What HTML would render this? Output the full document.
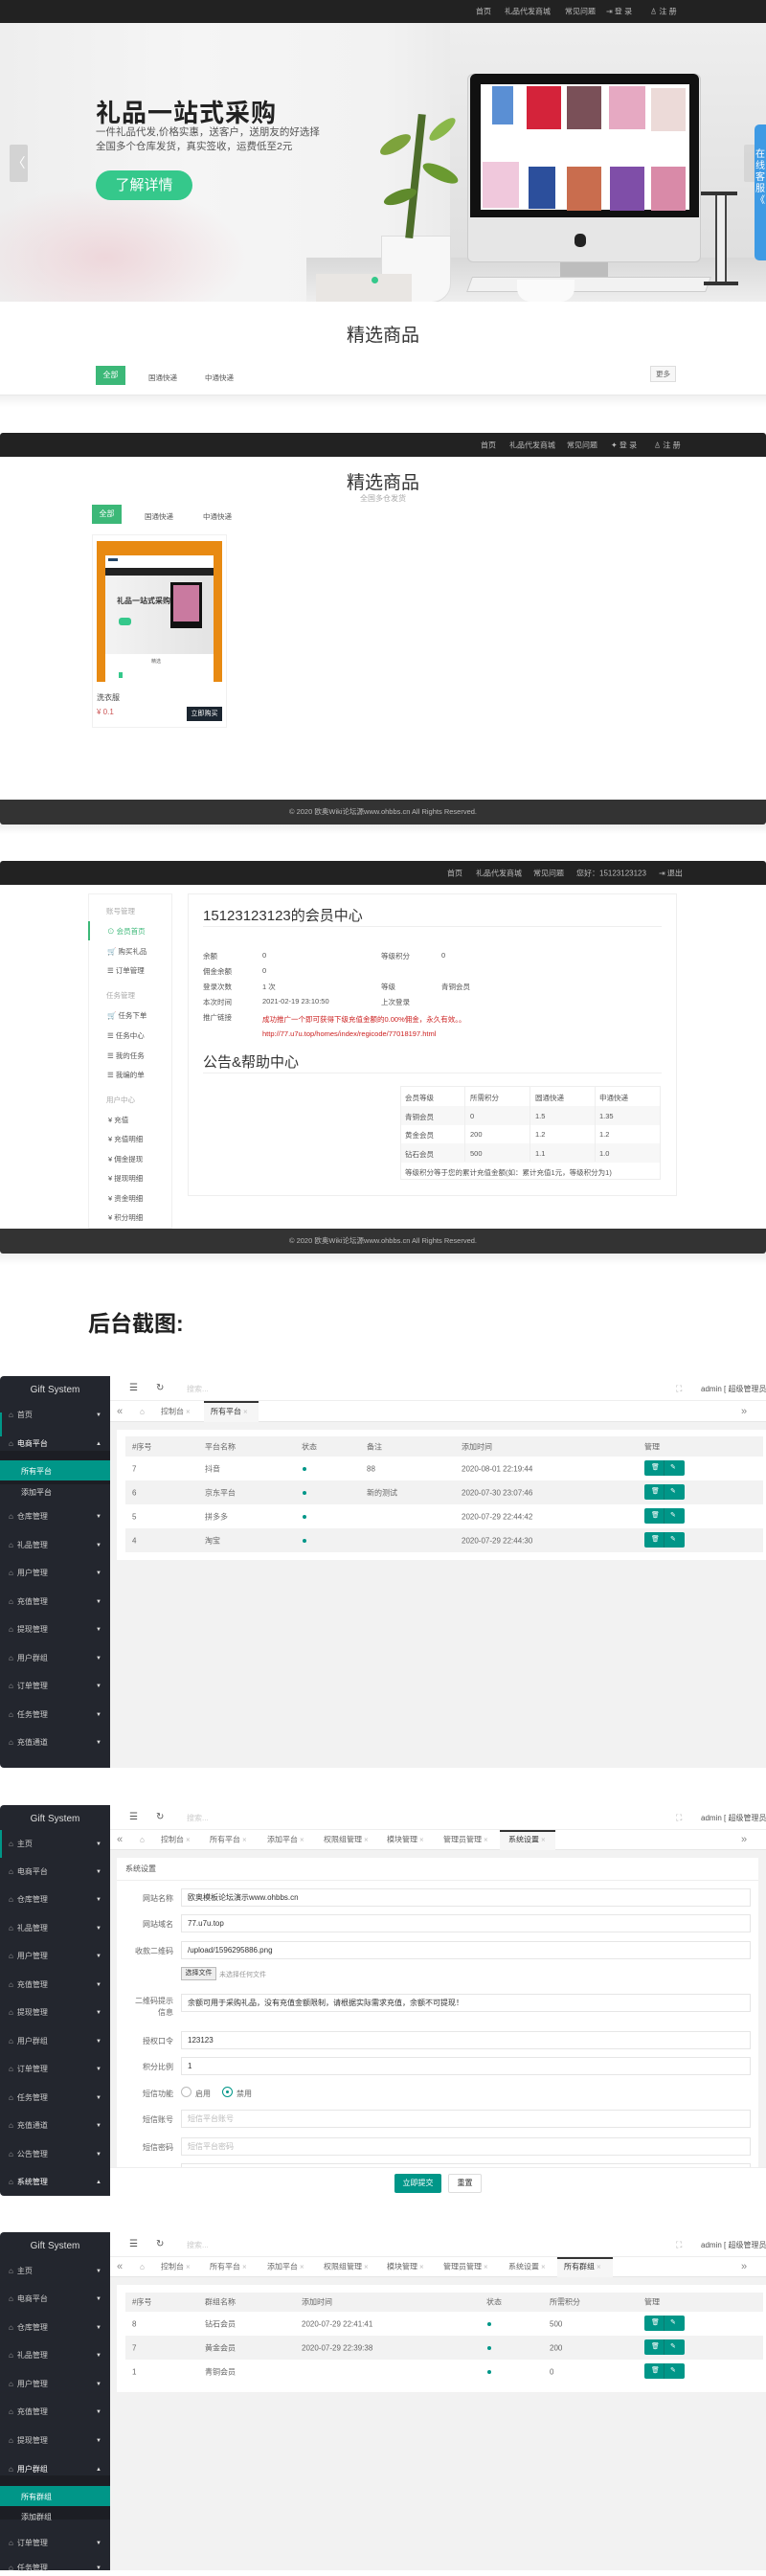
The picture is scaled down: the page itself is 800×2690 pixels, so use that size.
<!DOCTYPE html>
<html><head><meta charset="utf-8">
<style>
*{margin:0;padding:0;box-sizing:border-box}
body{width:800px;height:2684px;overflow:hidden;background:#fff;font-family:"Liberation Sans","Noto Sans CJK SC",sans-serif;position:relative;color:#333}
.a{position:absolute}
.nav{background:#222;color:#bbb;font-size:8px}
.nav span{position:absolute;top:50%;transform:translateY(-50%);white-space:nowrap}
.t{position:absolute;white-space:nowrap}
.sb{position:absolute;left:0;width:115px;background:#23262e;border-radius:4px 0 0 4px;overflow:hidden}
.si{position:absolute;left:0;width:115px;height:16px;line-height:16px;font-size:8px;color:#ccc;padding-left:9px;white-space:nowrap}
.si i{font-style:normal;margin-right:4px;color:#aaa}
.si b{position:absolute;right:9px;font-weight:normal;font-size:6px;color:#ddd}
.sub{position:absolute;left:0;width:115px;font-size:8px;color:#ddd;padding-left:22px;white-space:nowrap}
.hd{position:absolute;left:115px;right:0;background:#fff;border-bottom:1px solid #eee;font-size:9px;color:#555}
.tabs{position:absolute;left:115px;right:0;background:#fff;border-bottom:1px solid #e6e6e6;font-size:8px;color:#666}
.tabs span{position:absolute;top:50%;transform:translateY(-50%);white-space:nowrap}
.tabs .x{color:#ccc;font-size:7px}
.ct{position:absolute;left:115px;right:0;background:#f2f2f2}
.card{position:absolute;left:122px;right:0;background:#fff}
.tr{position:absolute;left:131px;right:3px;height:25px;font-size:8px;color:#666}
.tr span{position:absolute;top:50%;transform:translateY(-50%);white-space:nowrap}
.g{background:#f2f2f2}
.dot{width:4px;height:4px;border-radius:50%;background:#009688}
.btn2{position:absolute;left:673px;width:42px;height:16px;top:4px;background:#009688;border-radius:2px;color:#fff;font-size:7px}
.btn2:before{content:"";position:absolute;left:20px;top:0;width:1px;height:16px;background:#0a7d72}
.btn2 em{position:absolute;font-style:normal;top:3px}
.fl{position:absolute;right:calc(800px - 181px);font-size:8px;color:#666;text-align:right;white-space:nowrap}
.in{position:absolute;left:189px;width:595px;height:19px;border:1px solid #e6e6e6;font-size:8px;color:#333;padding-left:6px;line-height:17px;white-space:nowrap}
.ph{color:#bbb}
</style></head><body>

<!-- ===== Section 1: hero ===== -->
<div class="a nav" style="left:0;top:0;width:800px;height:24px">
<span style="left:497px">首页</span><span style="left:527px">礼品代发商城</span><span style="left:590px">常见问题</span><span style="left:633px">⇥ 登 录</span><span style="left:679px">♙ 注 册</span>
</div>
<div class="a" style="left:0;top:24px;width:800px;height:291px;background:linear-gradient(90deg,#eeeeee 0%,#f5f5f5 25%,#f2f2f2 50%,#e8e8e8 62%,#e0e0e0 75%,#ebebeb 100%);overflow:hidden">
  <div class="a" style="left:-40px;top:170px;width:300px;height:150px;background:radial-gradient(ellipse at center,#eed7db 0%,rgba(240,220,224,0) 70%)"></div>
  <div class="a" style="left:470px;top:0;width:330px;height:291px;background:linear-gradient(180deg,#eeeeee,#dcdcdc)"></div>
  <div class="a" style="left:320px;top:245px;width:480px;height:46px;background:linear-gradient(180deg,#d8d8d8,#eeeeee)"></div>
  <div class="a" style="left:488px;top:53px;width:244px;height:197px;background:#e6e6e6;border-radius:6px;border:1px solid #ccc"></div>
  <div class="a" style="left:491px;top:53px;width:239px;height:150px;background:#111;border-radius:6px 6px 0 0"></div>
  <div class="a" style="left:502px;top:64px;width:218px;height:131px;background:#fff"></div>
  <div class="a" style="left:514px;top:66px;width:22px;height:40px;background:#5a8fd4"></div>
  <div class="a" style="left:550px;top:66px;width:36px;height:45px;background:#d4233a"></div>
  <div class="a" style="left:592px;top:66px;width:36px;height:45px;background:#7a5058"></div>
  <div class="a" style="left:636px;top:66px;width:38px;height:45px;background:#e6a9c2"></div>
  <div class="a" style="left:680px;top:68px;width:36px;height:45px;background:#ecdad8"></div>
  <div class="a" style="left:504px;top:145px;width:38px;height:48px;background:#f0c8dc"></div>
  <div class="a" style="left:552px;top:150px;width:28px;height:44px;background:#2c4f9c"></div>
  <div class="a" style="left:592px;top:150px;width:36px;height:46px;background:#c96d4e"></div>
  <div class="a" style="left:637px;top:150px;width:36px;height:46px;background:#7f4ea8"></div>
  <div class="a" style="left:680px;top:150px;width:36px;height:46px;background:#d98aa8"></div>
  <div class="a" style="left:600px;top:220px;width:12px;height:14px;background:#222;border-radius:5px"></div>
  <div class="a" style="left:585px;top:250px;width:50px;height:22px;background:#bdbdbd"></div>
  <div class="a" style="left:490px;top:265px;width:250px;height:16px;background:#f2f2f2;border:1px solid #ccc;transform:skewX(-20deg)"></div>
  <div class="a" style="left:398px;top:222px;width:73px;height:70px;background:#f7f7f7;border-radius:0 0 20px 20px;border:1px solid #ddd"></div>
  <div class="a" style="left:540px;top:268px;width:60px;height:23px;background:#fafafa;border-radius:0 0 14px 14px"></div>
  <div class="a" style="left:430px;top:95px;width:8px;height:130px;background:#4d6d2a;transform:rotate(6deg)"></div>
  <div class="a" style="left:395px;top:120px;width:36px;height:14px;background:#7da33c;border-radius:50%;transform:rotate(-30deg)"></div>
  <div class="a" style="left:440px;top:150px;width:40px;height:14px;background:#6a9a30;border-radius:50%;transform:rotate(25deg)"></div>
  <div class="a" style="left:400px;top:175px;width:36px;height:13px;background:#5f8a2c;border-radius:50%;transform:rotate(-20deg)"></div>
  <div class="a" style="left:445px;top:105px;width:34px;height:12px;background:#8ab84a;border-radius:50%;transform:rotate(-40deg)"></div>
  <div class="a" style="left:330px;top:262px;width:100px;height:29px;background:#e9e6e3"></div>
  <div class="a" style="left:732px;top:176px;width:38px;height:4px;background:#333"></div>
  <div class="a" style="left:735px;top:270px;width:36px;height:4px;background:#333"></div>
  <div class="a" style="left:747px;top:180px;width:12px;height:90px;background:#eee;border-left:2px solid #444;border-right:2px solid #444"></div>
  <div class="t" style="left:100px;top:74px;font-size:26px;font-weight:bold;color:#222;letter-spacing:1px">礼品一站式采购</div>
  <div class="t" style="left:100px;top:107px;font-size:10.5px;color:#555;line-height:15px">一件礼品代发,价格实惠，送客户，送朋友的好选择<br>全国多个仓库发货，真实签收，运费低至2元</div>
  <div class="a" style="left:100px;top:154px;width:101px;height:31px;background:#35c88b;border-radius:16px;color:#fff;font-size:15px;text-align:center;line-height:31px">了解详情</div>
  <div class="a" style="left:10px;top:127px;width:19px;height:39px;background:rgba(200,200,200,.7);border-radius:2px;color:#fff;font-size:14px;text-align:center;line-height:39px">〈</div>
  <div class="a" style="left:777px;top:127px;width:19px;height:39px;background:rgba(200,200,200,.5);border-radius:2px"></div>
  <div class="a" style="left:788px;top:106px;width:12px;height:142px;background:#3e9ae4;border-radius:5px 0 0 5px;color:#fff;font-size:10px;line-height:12px;padding-top:26px;padding-left:1px">在<br>线<br>客<br>服<br>《</div>
  <div class="a" style="left:388px;top:265px;width:7px;height:7px;border-radius:50%;background:#35c88b"></div>
</div>
<div class="t" style="left:0;width:800px;text-align:center;top:335px;font-size:19px;color:#333">精选商品</div>
<div class="a" style="left:100px;top:382px;width:31px;height:20px;background:#3cb878;color:#fff;font-size:8px;text-align:center;line-height:20px">全部</div>
<div class="t" style="left:155px;top:389px;font-size:7.5px;color:#555">国通快递</div>
<div class="t" style="left:214px;top:389px;font-size:7.5px;color:#555">中通快递</div>
<div class="a" style="left:679px;top:382px;width:27px;height:17px;border:1px solid #ddd;background:#f7f7f7;color:#666;font-size:7.5px;text-align:center;line-height:15px">更多</div>
<div class="a" style="left:0;top:412px;width:800px;height:1px;background:#e8e8e8"></div>
<div class="a" style="left:0;top:413px;width:800px;height:12px;background:linear-gradient(#f0f0f0,#fff)"></div>

<!-- ===== Section 2 ===== -->
<div class="a nav" style="left:0;top:452px;width:800px;height:25px;border-radius:3px 3px 0 0">
<span style="left:502px">首页</span><span style="left:532px">礼品代发商城</span><span style="left:592px">常见问题</span><span style="left:638px">✦ 登 录</span><span style="left:683px">♙ 注 册</span>
</div>
<div class="t" style="left:0;width:800px;text-align:center;top:489px;font-size:19px;color:#333">精选商品</div>
<div class="t" style="left:0;width:800px;text-align:center;top:515px;font-size:8px;color:#aaa">全国多仓发货</div>
<div class="a" style="left:96px;top:527px;width:31px;height:20px;background:#3cb878;color:#fff;font-size:8px;text-align:center;line-height:20px">全部</div>
<div class="t" style="left:151px;top:534px;font-size:7.5px;color:#555">国通快递</div>
<div class="t" style="left:212px;top:534px;font-size:7.5px;color:#555">中通快递</div>
<div class="a" style="left:96px;top:558px;width:141px;height:202px;border:1px solid #f0f0f0;background:#fff"></div>
<div class="a" style="left:101px;top:565px;width:131px;height:147px;background:#e88a12">
  <div class="a" style="left:9px;top:15px;width:113px;height:132px;background:#fff">
    <div class="a" style="left:3px;top:3px;width:10px;height:3px;background:#246"></div>
    <div class="a" style="left:0;top:13px;width:113px;height:8px;background:#222"></div>
    <div class="a" style="left:0;top:21px;width:113px;height:82px;background:linear-gradient(90deg,#f3f3f3,#e3e3e3)"></div>
    <div class="t" style="left:12px;top:42px;font-size:8px;font-weight:bold;color:#333">礼品一站式采购</div>
    <div class="a" style="left:14px;top:65px;width:13px;height:8px;background:#35c88b;border-radius:3px"></div>
    <div class="a" style="left:68px;top:28px;width:33px;height:48px;background:#111"></div>
    <div class="a" style="left:71px;top:31px;width:27px;height:38px;background:#c97aa0"></div>
    <div class="t" style="left:48px;top:107px;font-size:5px;color:#666">精选</div>
    <div class="a" style="left:14px;top:122px;width:4px;height:6px;background:#35c88b"></div>
  </div>
</div>
<div class="t" style="left:101px;top:723px;font-size:8px;color:#444">洗衣服</div>
<div class="t" style="left:101px;top:739px;font-size:8px;color:#c55">¥ 0.1</div>
<div class="a" style="left:195px;top:738px;width:37px;height:15px;background:#1b2530;color:#fff;font-size:7px;text-align:center;line-height:15px">立即购买</div>
<div class="a" style="left:0;top:835px;width:800px;height:26px;background:#333;border-radius:0 0 3px 3px;color:#bbb;font-size:7.5px;text-align:center;line-height:26px">© 2020 欧奥Wiki论坛源www.ohbbs.cn All Rights Reserved.</div>
<div class="a" style="left:0;top:861px;width:800px;height:10px;background:linear-gradient(#eee,#fff)"></div>

<!-- ===== Section 3: member center ===== -->
<div class="a nav" style="left:0;top:899px;width:800px;height:25px;border-radius:3px 3px 0 0">
<span style="left:467px">首页</span><span style="left:497px">礼品代发商城</span><span style="left:557px">常见问题</span><span style="left:602px">您好：15123123123</span><span style="left:688px">⇥ 退出</span>
</div>
<div class="a" style="left:92px;top:933px;width:88px;height:350px;border:1px solid #f0f0f0;background:#fff"></div>
<div class="a" style="left:92px;top:962px;width:2px;height:20px;background:#3cb878"></div>
<div style="font-size:7.5px;color:#555">
<div class="t" style="left:111px;top:946px;color:#aaa">账号管理</div>
<div class="t" style="left:112px;top:967px;color:#3cb878">⊙ 会员首页</div>
<div class="t" style="left:112px;top:988px">🛒 购买礼品</div>
<div class="t" style="left:112px;top:1008px">☰ 订单管理</div>
<div class="t" style="left:111px;top:1034px;color:#aaa">任务管理</div>
<div class="t" style="left:112px;top:1055px">🛒 任务下单</div>
<div class="t" style="left:112px;top:1076px">☰ 任务中心</div>
<div class="t" style="left:112px;top:1097px">☰ 我的任务</div>
<div class="t" style="left:112px;top:1117px">☰ 我编的单</div>
<div class="t" style="left:111px;top:1143px;color:#aaa">用户中心</div>
<div class="t" style="left:113px;top:1164px">¥ 充值</div>
<div class="t" style="left:113px;top:1184px">¥ 充值明细</div>
<div class="t" style="left:113px;top:1205px">¥ 佣金提现</div>
<div class="t" style="left:113px;top:1225px">¥ 提现明细</div>
<div class="t" style="left:113px;top:1246px">¥ 资金明细</div>
<div class="t" style="left:113px;top:1266px">¥ 积分明细</div>
</div>
<div class="a" style="left:196px;top:933px;width:511px;height:316px;border:1px solid #eee;background:#fff"></div>
<div class="t" style="left:212px;top:945px;font-size:15px;color:#333">15123123123的会员中心</div>
<div class="a" style="left:212px;top:967px;width:479px;height:1px;background:#eee"></div>
<div style="font-size:7.5px;color:#555">
<div class="t" style="left:212px;top:993px">余额</div><div class="t" style="left:274px;top:993px">0</div><div class="t" style="left:398px;top:993px">等级积分</div><div class="t" style="left:461px;top:993px">0</div>
<div class="t" style="left:212px;top:1009px">佣金余额</div><div class="t" style="left:274px;top:1009px">0</div>
<div class="t" style="left:212px;top:1025px">登录次数</div><div class="t" style="left:274px;top:1025px">1 次</div><div class="t" style="left:398px;top:1025px">等级</div><div class="t" style="left:461px;top:1025px">青铜会员</div>
<div class="t" style="left:212px;top:1041px">本次时间</div><div class="t" style="left:274px;top:1041px">2021-02-19 23:10:50</div><div class="t" style="left:398px;top:1041px">上次登录</div>
<div class="t" style="left:212px;top:1057px">推广链接</div>
<div class="t" style="left:274px;top:1057px;color:#c22;line-height:15px">成功推广一个即可获得下级充值金额的0.00%佣金，永久有效。。<br>http://77.u7u.top/homes/index/regicode/77018197.html</div>
</div>
<div class="t" style="left:212px;top:1098px;font-size:15px;color:#333">公告&amp;帮助中心</div>
<div class="a" style="left:212px;top:1120px;width:479px;height:1px;background:#eee"></div>
<div class="a" style="left:418px;top:1134px;width:272px;height:98px;border:1px solid #eee;font-size:7.5px;color:#555">
  <div class="a" style="left:0;top:20px;width:270px;height:20px;background:#f7f7f7"></div>
  <div class="a" style="left:0;top:59px;width:270px;height:20px;background:#f7f7f7"></div>
  <div class="a" style="left:66px;top:0;width:1px;height:78px;background:#eee"></div>
  <div class="a" style="left:134px;top:0;width:1px;height:78px;background:#eee"></div>
  <div class="a" style="left:202px;top:0;width:1px;height:78px;background:#eee"></div>
  <div class="t" style="left:4px;top:6px">会员等级</div><div class="t" style="left:72px;top:6px">所需积分</div><div class="t" style="left:140px;top:6px">圆通快递</div><div class="t" style="left:207px;top:6px">申通快递</div>
  <div class="t" style="left:4px;top:26px">青铜会员</div><div class="t" style="left:72px;top:26px">0</div><div class="t" style="left:140px;top:26px">1.5</div><div class="t" style="left:207px;top:26px">1.35</div>
  <div class="t" style="left:4px;top:45px">黄金会员</div><div class="t" style="left:72px;top:45px">200</div><div class="t" style="left:140px;top:45px">1.2</div><div class="t" style="left:207px;top:45px">1.2</div>
  <div class="t" style="left:4px;top:65px">钻石会员</div><div class="t" style="left:72px;top:65px">500</div><div class="t" style="left:140px;top:65px">1.1</div><div class="t" style="left:207px;top:65px">1.0</div>
  <div class="t" style="left:4px;top:84px">等级积分等于您的累计充值金额(如：累计充值1元，等级积分为1)</div>
</div>
<div class="a" style="left:0;top:1283px;width:800px;height:26px;background:#333;border-radius:0 0 3px 3px;color:#bbb;font-size:7.5px;text-align:center;line-height:26px">© 2020 欧奥Wiki论坛源www.ohbbs.cn All Rights Reserved.</div>
<div class="a" style="left:0;top:1309px;width:800px;height:12px;background:linear-gradient(#eee,#fff)"></div>

<div class="t" style="left:92px;top:1363px;font-size:23px;font-weight:bold;color:#222">后台截图:</div>

<!-- ===== Admin 1 ===== -->
<div class="ct" style="top:1437px;height:409px"></div>
<div class="sb" style="top:1437px;height:409px">
  <div class="t" style="left:0;width:115px;text-align:center;top:9px;font-size:10px;color:#ddd">Gift System</div>
  <div class="a" style="left:0;top:78px;width:115px;height:35px;background:#1c1e24"></div>
  <div class="a" style="left:0;top:88px;width:115px;height:21px;background:#009688"></div>
  <div class="a" style="left:0;top:38px;width:2px;height:25px;background:#009688"></div>
</div>
<div class="si" style="top:1470px"><i>⌂</i>首页<b>▼</b></div>
<div class="si" style="top:1500px;color:#fff"><i>⌂</i>电商平台<b>▲</b></div>
<div class="sub" style="top:1531px;color:#fff">所有平台</div>
<div class="sub" style="top:1553px">添加平台</div>
<div class="si" style="top:1576px"><i>⌂</i>仓库管理<b>▼</b></div>
<div class="si" style="top:1606px"><i>⌂</i>礼品管理<b>▼</b></div>
<div class="si" style="top:1635px"><i>⌂</i>用户管理<b>▼</b></div>
<div class="si" style="top:1665px"><i>⌂</i>充值管理<b>▼</b></div>
<div class="si" style="top:1694px"><i>⌂</i>提现管理<b>▼</b></div>
<div class="si" style="top:1724px"><i>⌂</i>用户群组<b>▼</b></div>
<div class="si" style="top:1753px"><i>⌂</i>订单管理<b>▼</b></div>
<div class="si" style="top:1783px"><i>⌂</i>任务管理<b>▼</b></div>
<div class="si" style="top:1812px"><i>⌂</i>充值通道<b>▼</b></div>
<div class="hd" style="top:1437px;height:26px">
  <span class="t" style="left:20px;top:7px;font-size:10px">☰</span><span class="t" style="left:48px;top:7px;font-size:10px">↻</span><span class="t" style="left:80px;top:8px;font-size:8px;color:#ccc">搜索...</span>
  <span class="t" style="left:591px;top:8px;color:#aaa">⛶</span><span class="t" style="left:617px;top:8px;font-size:8px">admin [ 超级管理员 ]</span>
</div>
<div class="tabs" style="top:1463px;height:22px">
  <span style="left:7px;font-size:11px;color:#888">«</span><span style="left:31px;color:#999">⌂</span>
  <span style="left:53px">控制台 <b class="x">×</b></span>
  <div class="a" style="left:98px;top:0;width:57px;height:22px;background:#f6f6f6;border-top:2px solid #333"></div>
  <span style="left:105px;color:#333">所有平台 <b class="x">×</b></span>
  <span style="left:659px;font-size:11px;color:#888">»</span>
</div>
<div class="card" style="top:1493px;height:136px"></div>
<div class="tr g" style="top:1500px;height:21px"><span style="left:7px">#序号</span><span style="left:83px">平台名称</span><span style="left:184px">状态</span><span style="left:252px">备注</span><span style="left:351px">添加时间</span><span style="left:542px">管理</span></div>
<div class="tr" style="top:1521px"><span style="left:7px">7</span><span style="left:83px">抖音</span><span class="dot" style="left:185px"></span><span style="left:252px">88</span><span style="left:351px">2020-08-01 22:19:44</span><div class="btn2" style="left:542px"><em style="left:7px">🗑</em><em style="left:27px">✎</em></div></div>
<div class="tr g" style="top:1546px"><span style="left:7px">6</span><span style="left:83px">京东平台</span><span class="dot" style="left:185px"></span><span style="left:252px">新的测试</span><span style="left:351px">2020-07-30 23:07:46</span><div class="btn2" style="left:542px"><em style="left:7px">🗑</em><em style="left:27px">✎</em></div></div>
<div class="tr" style="top:1571px"><span style="left:7px">5</span><span style="left:83px">拼多多</span><span class="dot" style="left:185px"></span><span style="left:351px">2020-07-29 22:44:42</span><div class="btn2" style="left:542px"><em style="left:7px">🗑</em><em style="left:27px">✎</em></div></div>
<div class="tr g" style="top:1596px"><span style="left:7px">4</span><span style="left:83px">淘宝</span><span class="dot" style="left:185px"></span><span style="left:351px">2020-07-29 22:44:30</span><div class="btn2" style="left:542px"><em style="left:7px">🗑</em><em style="left:27px">✎</em></div></div>

<!-- ===== Admin 2 ===== -->
<div class="ct" style="top:1885px;height:408px"></div>
<div class="sb" style="top:1885px;height:408px">
  <div class="t" style="left:0;width:115px;text-align:center;top:9px;font-size:10px;color:#ddd">Gift System</div>
  <div class="a" style="left:0;top:26px;width:2px;height:29px;background:#009688"></div>
</div>
<div class="si" style="top:1918px"><i>⌂</i>主页<b>▼</b></div>
<div class="si" style="top:1947px"><i>⌂</i>电商平台<b>▼</b></div>
<div class="si" style="top:1976px"><i>⌂</i>仓库管理<b>▼</b></div>
<div class="si" style="top:2006px"><i>⌂</i>礼品管理<b>▼</b></div>
<div class="si" style="top:2035px"><i>⌂</i>用户管理<b>▼</b></div>
<div class="si" style="top:2065px"><i>⌂</i>充值管理<b>▼</b></div>
<div class="si" style="top:2094px"><i>⌂</i>提现管理<b>▼</b></div>
<div class="si" style="top:2124px"><i>⌂</i>用户群组<b>▼</b></div>
<div class="si" style="top:2153px"><i>⌂</i>订单管理<b>▼</b></div>
<div class="si" style="top:2183px"><i>⌂</i>任务管理<b>▼</b></div>
<div class="si" style="top:2212px"><i>⌂</i>充值通道<b>▼</b></div>
<div class="si" style="top:2242px"><i>⌂</i>公告管理<b>▼</b></div>
<div class="si" style="top:2271px;color:#fff"><i>⌂</i>系统管理<b>▲</b></div>
<div class="hd" style="top:1885px;height:26px">
  <span class="t" style="left:20px;top:7px;font-size:10px">☰</span><span class="t" style="left:48px;top:7px;font-size:10px">↻</span><span class="t" style="left:80px;top:8px;font-size:8px;color:#ccc">搜索...</span>
  <span class="t" style="left:591px;top:8px;color:#aaa">⛶</span><span class="t" style="left:617px;top:8px;font-size:8px">admin [ 超级管理员 ]</span>
</div>
<div class="tabs" style="top:1911px;height:21px">
  <span style="left:7px;font-size:11px;color:#888">«</span><span style="left:31px;color:#999">⌂</span>
  <span style="left:53px">控制台 <b class="x">×</b></span>
  <span style="left:104px">所有平台 <b class="x">×</b></span>
  <span style="left:164px">添加平台 <b class="x">×</b></span>
  <span style="left:223px">权限组管理 <b class="x">×</b></span>
  <span style="left:289px">模块管理 <b class="x">×</b></span>
  <span style="left:348px">管理员管理 <b class="x">×</b></span>
  <div class="a" style="left:407px;top:0;width:58px;height:21px;background:#f6f6f6;border-top:2px solid #333"></div>
  <span style="left:416px;color:#333">系统设置 <b class="x">×</b></span>
  <span style="left:659px;font-size:11px;color:#888">»</span>
</div>
<div class="card" style="top:1940px;height:323px;right:8px"></div>
<div class="t" style="left:131px;top:1946px;font-size:8px;color:#555">系统设置</div>
<div class="a" style="left:122px;top:1963px;width:670px;height:1px;background:#eee"></div>
<div class="fl" style="top:1977px">网站名称</div><div class="in" style="top:1972px">欧奥模板论坛演示www.ohbbs.cn</div>
<div class="fl" style="top:2004px">网站域名</div><div class="in" style="top:1999px">77.u7u.top</div>
<div class="fl" style="top:2032px">收款二维码</div><div class="in" style="top:2027px">/upload/1596295886.png</div>
<div class="a" style="left:189px;top:2054px;width:37px;height:14px;border:1px solid #bbb;background:#eee;font-size:7px;line-height:12px;text-align:center;color:#333">选择文件</div>
<div class="t" style="left:229px;top:2057px;font-size:7px;color:#999">未选择任何文件</div>
<div class="fl" style="top:2084px;line-height:12px">二维码提示<br>信息</div><div class="in" style="top:2082px">余额可用于采购礼品，没有充值金额限制，请根据实际需求充值，余额不可提现！</div>
<div class="fl" style="top:2126px">授权口令</div><div class="in" style="top:2121px">123123</div>
<div class="fl" style="top:2153px">积分比例</div><div class="in" style="top:2148px">1</div>
<div class="fl" style="top:2181px">短信功能</div>
<div class="a" style="left:189px;top:2179px;width:11px;height:11px;border:1px solid #bbb;border-radius:50%"></div><div class="t" style="left:204px;top:2181px;font-size:8px;color:#666">启用</div>
<div class="a" style="left:232px;top:2179px;width:11px;height:11px;border:1px solid #009688;border-radius:50%"></div><div class="a" style="left:236px;top:2183px;width:3px;height:3px;background:#009688;border-radius:50%"></div><div class="t" style="left:247px;top:2181px;font-size:8px;color:#666">禁用</div>
<div class="fl" style="top:2208px">短信账号</div><div class="in ph" style="top:2203px">短信平台账号</div>
<div class="fl" style="top:2237px">短信密码</div><div class="in" style="top:2232px;color:#bbb">短信平台密码</div>
<div class="in" style="top:2259px;height:4px;border-bottom:none"></div>
<div class="a" style="left:115px;top:2263px;width:685px;height:30px;background:#fff;border-top:1px solid #eee"></div>
<div class="a" style="left:412px;top:2270px;width:49px;height:20px;background:#009688;color:#fff;font-size:8px;text-align:center;line-height:20px;border-radius:2px">立即提交</div>
<div class="a" style="left:468px;top:2270px;width:35px;height:20px;border:1px solid #ddd;background:#fff;color:#333;font-size:8px;text-align:center;line-height:18px;border-radius:2px">重置</div>

<!-- ===== Admin 3 ===== -->
<div class="ct" style="top:2331px;height:353px"></div>
<div class="sb" style="top:2331px;height:353px;border-radius:4px 0 0 0">
  <div class="t" style="left:0;width:115px;text-align:center;top:9px;font-size:10px;color:#ddd">Gift System</div>
  <div class="a" style="left:0;top:254px;width:115px;height:46px;background:#1c1e24"></div>
  <div class="a" style="left:0;top:265px;width:115px;height:21px;background:#009688"></div>
</div>
<div class="si" style="top:2364px"><i>⌂</i>主页<b>▼</b></div>
<div class="si" style="top:2393px"><i>⌂</i>电商平台<b>▼</b></div>
<div class="si" style="top:2423px"><i>⌂</i>仓库管理<b>▼</b></div>
<div class="si" style="top:2452px"><i>⌂</i>礼品管理<b>▼</b></div>
<div class="si" style="top:2482px"><i>⌂</i>用户管理<b>▼</b></div>
<div class="si" style="top:2511px"><i>⌂</i>充值管理<b>▼</b></div>
<div class="si" style="top:2541px"><i>⌂</i>提现管理<b>▼</b></div>
<div class="si" style="top:2571px;color:#fff"><i>⌂</i>用户群组<b>▲</b></div>
<div class="sub" style="top:2602px;color:#fff">所有群组</div>
<div class="sub" style="top:2623px">添加群组</div>
<div class="si" style="top:2648px"><i>⌂</i>订单管理<b>▼</b></div>
<div class="si" style="top:2674px"><i>⌂</i>任务管理<b>▼</b></div>
<div class="hd" style="top:2331px;height:26px">
  <span class="t" style="left:20px;top:7px;font-size:10px">☰</span><span class="t" style="left:48px;top:7px;font-size:10px">↻</span><span class="t" style="left:80px;top:8px;font-size:8px;color:#ccc">搜索...</span>
  <span class="t" style="left:591px;top:8px;color:#aaa">⛶</span><span class="t" style="left:617px;top:8px;font-size:8px">admin [ 超级管理员 ]</span>
</div>
<div class="tabs" style="top:2357px;height:21px">
  <span style="left:7px;font-size:11px;color:#888">«</span><span style="left:31px;color:#999">⌂</span>
  <span style="left:53px">控制台 <b class="x">×</b></span>
  <span style="left:104px">所有平台 <b class="x">×</b></span>
  <span style="left:164px">添加平台 <b class="x">×</b></span>
  <span style="left:223px">权限组管理 <b class="x">×</b></span>
  <span style="left:289px">模块管理 <b class="x">×</b></span>
  <span style="left:348px">管理员管理 <b class="x">×</b></span>
  <span style="left:416px">系统设置 <b class="x">×</b></span>
  <div class="a" style="left:467px;top:0;width:58px;height:21px;background:#f6f6f6;border-top:2px solid #333"></div>
  <span style="left:474px;color:#333">所有群组 <b class="x">×</b></span>
  <span style="left:659px;font-size:11px;color:#888">»</span>
</div>
<div class="card" style="top:2386px;height:112px"></div>
<div class="tr g" style="top:2394px;height:20px"><span style="left:7px">#序号</span><span style="left:83px">群组名称</span><span style="left:184px">添加时间</span><span style="left:377px">状态</span><span style="left:443px">所需积分</span><span style="left:542px">管理</span></div>
<div class="tr" style="top:2414px"><span style="left:7px">8</span><span style="left:83px">钻石会员</span><span style="left:184px">2020-07-29 22:41:41</span><span class="dot" style="left:378px"></span><span style="left:443px">500</span><div class="btn2" style="left:542px"><em style="left:7px">🗑</em><em style="left:27px">✎</em></div></div>
<div class="tr g" style="top:2439px"><span style="left:7px">7</span><span style="left:83px">黄金会员</span><span style="left:184px">2020-07-29 22:39:38</span><span class="dot" style="left:378px"></span><span style="left:443px">200</span><div class="btn2" style="left:542px"><em style="left:7px">🗑</em><em style="left:27px">✎</em></div></div>
<div class="tr" style="top:2464px"><span style="left:7px">1</span><span style="left:83px">青铜会员</span><span class="dot" style="left:378px"></span><span style="left:443px">0</span><div class="btn2" style="left:542px"><em style="left:7px">🗑</em><em style="left:27px">✎</em></div></div>

</body></html>
